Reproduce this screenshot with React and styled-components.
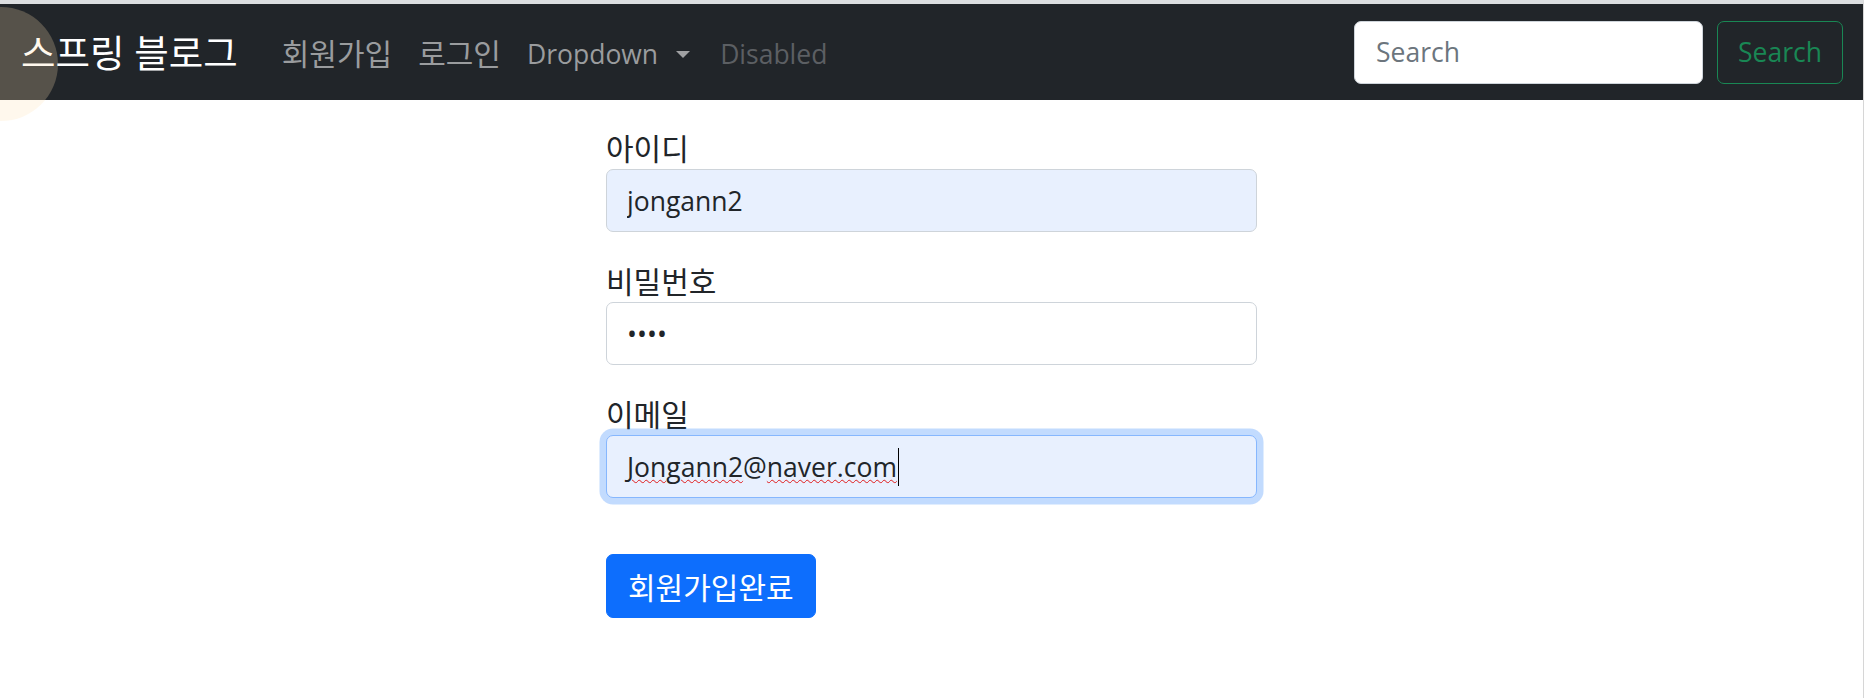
import React from "react"
import styled, { createGlobalStyle } from "styled-components"

const FONT = `"Open Sans", "Noto Sans CJK KR", sans-serif`
const BASE = "26.5px"
// Hangul in Noto CJK draws smaller than the Malgun Gothic of the shot
const KO = "30px"

const GlobalStyle = createGlobalStyle`
  html, body {
    margin: 0;
    padding: 0;
    background: #ffffff;
  }
  body {
    font-family: ${FONT};
    font-size: ${BASE};
    color: #212529;
  }
  * {
    box-sizing: border-box;
  }
`

const Frame = styled.div`
  position: relative;
  min-height: 698px;
  margin-right: 2px;
  border-top: 4px solid #dcdee0;
  border-right: 1px solid #d6d6d6;
  overflow: hidden;
`

const Navbar = styled.nav`
  display: flex;
  align-items: center;
  height: 96px;
  padding: 0 20px 0 21px;
  background: #212529;
`

const Brand = styled.a`
  margin-top: 2px;
  margin-right: 31px;
  color: #ffffff;
  font-size: 37.5px;
  line-height: 50px;
  text-decoration: none;
  white-space: nowrap;
`

const NavList = styled.ul`
  display: flex;
  align-items: center;
  margin: 3px 0 0;
  padding: 0;
  list-style: none;
`

const NavLink = styled.a`
  display: flex;
  align-items: center;
  padding: 0 13px;
  line-height: 40px;
  font-size: ${(p) => (p.$ko ? KO : BASE)};
  color: ${(p) => (p.$disabled ? "#5c5f63" : "#9a9c9e")};
  text-decoration: none;
  white-space: nowrap;
`

const Caret = styled.span`
  display: inline-block;
  margin: 1px 4px 0 18px;
  border-top: 7px solid #a0a1a3;
  border-left: 7.5px solid transparent;
  border-right: 7.5px solid transparent;
`

const SearchForm = styled.form`
  display: flex;
  gap: 14px;
  margin-left: auto;
`

const SearchInput = styled.input`
  width: 349px;
  height: 63px;
  padding: 0 21px;
  border: 1px solid #ced4da;
  border-radius: 7px;
  background: #ffffff;
  font-family: ${FONT};
  font-size: ${BASE};
  color: #212529;
  outline: none;

  &::placeholder {
    color: #6c757d;
  }
`

const OutlineButton = styled.button`
  height: 63px;
  padding: 0 20px;
  border: 1px solid #198754;
  border-radius: 7px;
  background: transparent;
  color: #198754;
  font-family: ${FONT};
  font-size: ${BASE};
`

const Container = styled.main`
  width: 651px;
  margin: 0 auto;
  padding-top: 29px;
`

const Group = styled.div`
  display: flex;
  flex-direction: column;
  margin-bottom: 30px;
`

const Label = styled.label`
  font-size: ${KO};
  line-height: 40px;
  color: #212529;
`

const Field = styled.input`
  width: 100%;
  height: 63px;
  padding: 0 20px;
  border: 1px solid #ced4da;
  border-radius: 7px;
  background: ${(p) => (p.$autofill ? "#e8f0fe" : "#ffffff")};
  font-family: ${FONT};
  font-size: ${BASE};
  color: #212529;
  outline: none;
`

const FocusedField = styled.div`
  display: flex;
  align-items: center;
  width: 100%;
  height: 63px;
  padding: 0 20px;
  border: 1px solid #86b7fe;
  border-radius: 7px;
  background: #e8f0fe;
  box-shadow: 0 0 0 6.5px rgba(13, 110, 253, 0.25);
  color: #212529;
  white-space: nowrap;
`

const Misspelled = styled.span`
  text-decoration: underline wavy #e01b1b;
  text-decoration-thickness: 1px;
  text-underline-offset: 2px;
`

const TextCaret = styled.span`
  display: inline-block;
  width: 1px;
  height: 38px;
  margin-left: 1px;
  background: #000000;
`

const PrimaryButton = styled.button`
  height: 64px;
  margin-top: 26px;
  padding: 0 21px;
  border: 1px solid #0d6efd;
  border-radius: 7px;
  background: #0d6efd;
  color: #ffffff;
  font-family: ${FONT};
  font-size: ${KO};
`

const PointerHalo = styled.div`
  position: absolute;
  left: -56px;
  top: 3px;
  width: 114px;
  height: 114px;
  border-radius: 50%;
  background: rgba(255, 225, 178, 0.24);
  pointer-events: none;
`

const navItems = [
  { label: "회원가입", ko: true },
  { label: "로그인", ko: true },
  { label: "Dropdown", caret: true },
  { label: "Disabled", disabled: true },
]

const App = () => {
  return (
    <Frame>
      <GlobalStyle />
      <Navbar>
        <Brand href="#">스프링 블로그</Brand>
        <NavList>
          {navItems.map((item) => (
            <li key={item.label}>
              <NavLink href="#" $ko={item.ko} $disabled={item.disabled}>
                {item.label}
                {item.caret && <Caret />}
              </NavLink>
            </li>
          ))}
        </NavList>
        <SearchForm onSubmit={(e) => e.preventDefault()}>
          <SearchInput type="search" placeholder="Search" />
          <OutlineButton type="submit">Search</OutlineButton>
        </SearchForm>
      </Navbar>

      <Container>
        <Group>
          <Label>아이디</Label>
          <Field $autofill type="text" defaultValue="jongann2" />
        </Group>
        <Group>
          <Label>비밀번호</Label>
          <Field type="password" defaultValue="1234" />
        </Group>
        <Group>
          <Label>이메일</Label>
          <FocusedField>
            <Misspelled>Jongann2</Misspelled>@<Misspelled>naver.com</Misspelled>
            <TextCaret />
          </FocusedField>
        </Group>
        <PrimaryButton type="button">회원가입완료</PrimaryButton>
      </Container>

      <PointerHalo />
    </Frame>
  )
}

export default App
